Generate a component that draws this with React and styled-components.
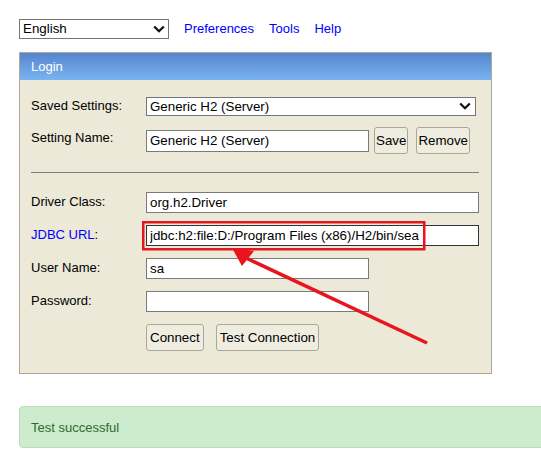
import React from "react";
import styled, { createGlobalStyle } from "styled-components";

const Global = createGlobalStyle`
  html, body { margin: 0; padding: 0; background: #fff; overflow: hidden; }
  body { font-family: "Liberation Sans", Arial, sans-serif; font-size: 13px; color: #000; }
  * { box-sizing: border-box; }
`;

const Page = styled.div`
  position: relative;
  width: 541px;
  height: 456px;
  padding: 19px 0 0 19px;
  overflow: hidden;
`;

const Toolbar = styled.div`
  display: flex;
  align-items: center;
  gap: 15px;
  height: 19px;
`;

const SelectWrap = styled.div`
  position: relative;
  width: ${(p) => p.$w}px;
  height: ${(p) => p.$h}px;
  flex: none;
`;

const Select = styled.select`
  appearance: none;
  -webkit-appearance: none;
  width: 100%;
  height: 100%;
  margin: 0;
  border: 1px solid #767676;
  border-radius: 0;
  background: #fff;
  font-family: "Liberation Sans", Arial, sans-serif;
  font-size: 13.333px;
  color: #000;
  padding: 0 0 0 3px;
  line-height: 17px;
  outline: none;
`;

const Chevron = styled.svg`
  position: absolute;
  right: ${(p) => p.$r}px;
  top: 50%;
  margin-top: -4px;
  width: 12px;
  height: 8px;
  pointer-events: none;
`;

const Link = styled.a`
  color: #0000ff;
  text-decoration: none;
  font-size: 13px;
  line-height: 15px;
  cursor: pointer;
`;

const Panel = styled.div`
  margin-top: 14px;
  width: 473px;
  border: 1px solid #aca899;
  background: #ece9d8;
`;

const PanelHeader = styled.div`
  height: 27px;
  display: flex;
  align-items: center;
  padding-left: 11px;
  color: #fff;
  font-size: 13px;
  background: linear-gradient(to bottom, #5685cb 0%, #6a9fe2 55%, #7ab3f2 100%);
`;

const PanelBody = styled.div`
  padding: 16px 11px 22px 11px;
  display: flex;
  flex-direction: column;
`;

const Group = styled.div`
  display: flex;
  flex-direction: column;
  gap: ${(p) => p.$gap}px;
`;

const Row = styled.div`
  display: flex;
  align-items: center;
  height: ${(p) => p.$h}px;
`;

const Label = styled.div`
  width: 115px;
  flex: none;
  margin-top: ${(p) => (p.$dy != null ? p.$dy : -2)}px;
  line-height: 15px;
`;

const Blue = styled.span`
  color: #0000ff;
`;

const Input = styled.input`
  width: ${(p) => p.$w}px;
  height: ${(p) => p.$h || 21}px;
  margin: 0;
  border: 1px solid ${(p) => (p.$dark ? "#333" : "#7a7a7a")};
  background: #fff;
  font-family: "Liberation Sans", Arial, sans-serif;
  font-size: 13.333px;
  color: #000;
  padding: 0 0 0 3px;
  outline: none;
`;

const Buttons = styled.div`
  display: flex;
  align-items: center;
  gap: ${(p) => p.$gap}px;
  margin-left: ${(p) => p.$ml || 0}px;
`;

const Button = styled.button`
  height: 27px;
  margin: 0;
  padding: 0 ${(p) => (p.$wide ? 3 : 1)}px;
  border: 1px solid #aca899;
  border-radius: 3px;
  background: #efece0;
  font-family: "Liberation Sans", Arial, sans-serif;
  font-size: 13.333px;
  color: #000;
  cursor: pointer;
`;

const Rule = styled.hr`
  margin: 18px 1px 19px 0;
  border: none;
  border-top: 1px solid #7c7c7c;
  height: 0;
`;

const Alert = styled.div`
  margin-top: 32px;
  width: 530px;
  height: 42px;
  display: flex;
  align-items: center;
  padding-left: 11px;
  background: #cdebcd;
  border: 1px solid #b9dcb9;
  border-radius: 4px;
  color: #2f6a2f;
  font-size: 13px;
`;

const Overlay = styled.svg`
  position: absolute;
  left: 0;
  top: 0;
  width: 541px;
  height: 456px;
  pointer-events: none;
`;

const ChevronIcon = ({ r }) => (
  <Chevron $r={r} viewBox="0 0 12 8">
    <path d="M1.2 1.5 L6 6.2 L10.8 1.5" fill="none" stroke="#111" strokeWidth="2.3" />
  </Chevron>
);

export default function App() {
  return (
    <>
      <Global />
      <Page>
        <Toolbar>
          <SelectWrap $w={150} $h={20}>
            <Select defaultValue="en">
              <option value="en">English</option>
            </Select>
            <ChevronIcon r={4} />
          </SelectWrap>
          <Link>Preferences</Link>
          <Link>Tools</Link>
          <Link>Help</Link>
        </Toolbar>

        <Panel>
          <PanelHeader>Login</PanelHeader>
          <PanelBody>
            <Group $gap={11}>
              <Row $h={20}>
                <Label>Saved Settings:</Label>
                <SelectWrap $w={330} $h={19}>
                  <Select defaultValue="srv">
                    <option value="srv">Generic H2 (Server)</option>
                  </Select>
                  <ChevronIcon r={5} />
                </SelectWrap>
              </Row>
              <Row $h={27}>
                <Label $dy={-6}>Setting Name:</Label>
                <Input $w={223} $h={22} defaultValue="Generic H2 (Server)" />
                <Buttons $gap={8} $ml={5}>
                  <Button>Save</Button>
                  <Button>Remove</Button>
                </Buttons>
              </Row>
            </Group>

            <Rule />

            <Group $gap={12}>
              <Row $h={21}>
                <Label>Driver Class:</Label>
                <Input $w={333} defaultValue="org.h2.Driver" />
              </Row>
              <Row $h={21}>
                <Label>
                  <Blue>JDBC URL</Blue>:
                </Label>
                <Input $w={333} $dark defaultValue="jdbc:h2:file:D:/Program Files (x86)/H2/bin/sea" />
              </Row>
              <Row $h={21}>
                <Label>User Name:</Label>
                <Input $w={223} defaultValue="sa" />
              </Row>
              <Row $h={21}>
                <Label>Password:</Label>
                <Input $w={223} type="password" defaultValue="" />
              </Row>
              <Row $h={27}>
                <Label />
                <Buttons $gap={12}>
                  <Button $wide>Connect</Button>
                  <Button $wide>Test Connection</Button>
                </Buttons>
              </Row>
            </Group>
          </PanelBody>
        </Panel>

        <Alert>Test successful</Alert>

        <Overlay viewBox="0 0 541 456">
          <rect x="143.25" y="222.25" width="281" height="27" fill="none" stroke="#e8151f" strokeWidth="2.5" />
          <line x1="427" y1="343" x2="246" y2="258" stroke="#e8151f" strokeWidth="3.5" />
          <polygon points="232,248 254,251 242,266" fill="#e8151f" />
        </Overlay>
      </Page>
    </>
  );
}
